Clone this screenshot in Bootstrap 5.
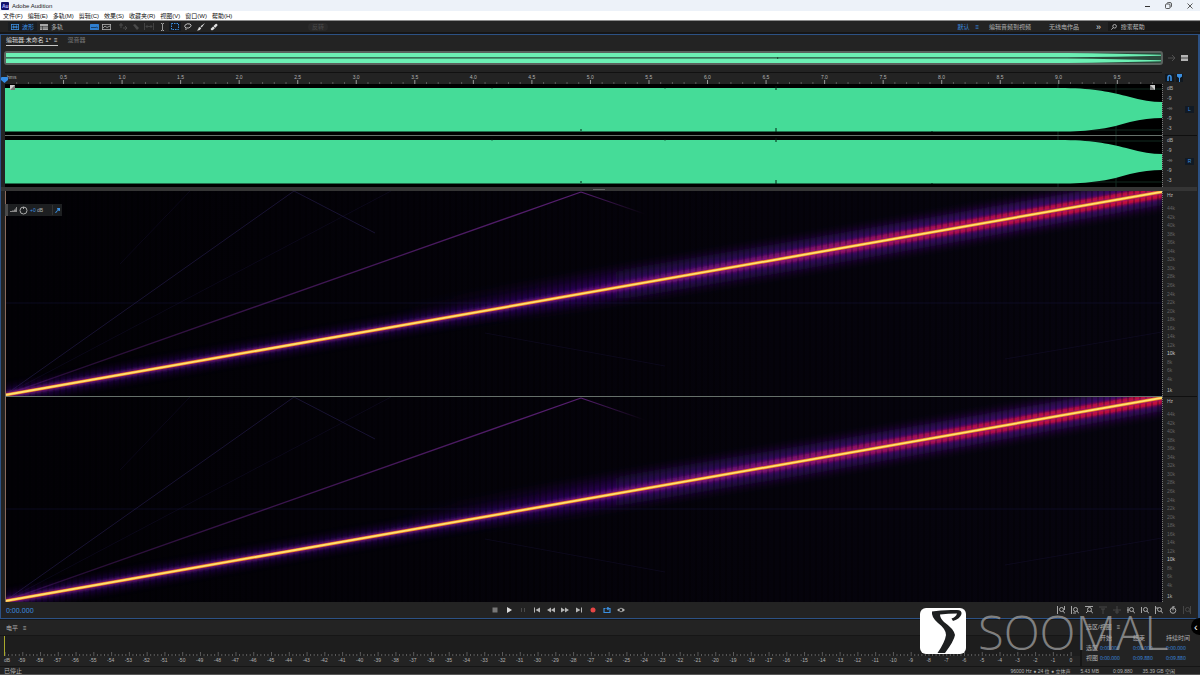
<!DOCTYPE html>
<html lang="zh-CN">
<head>
<meta charset="utf-8">
<meta name="viewport" content="width=device-width, initial-scale=1">
<title>Adobe Audition</title>
<link href="https://cdn.jsdelivr.net/npm/bootstrap@5.3.0/dist/css/bootstrap.min.css" rel="stylesheet">
<style>
  :root { --panel:#232323; --edge:#161616; --blue:#3b8fe0; --dim:#b2b2b2; --focus:#2c5184; }
  body { font-family:"Liberation Sans","Noto Sans CJK SC",sans-serif; font-size:6px; line-height:8px; background:var(--edge); color:var(--dim); overflow:hidden; }
  button, input { font:inherit; color:inherit; background:none; border:0; padding:0; }
  button { white-space:nowrap; }
  svg { display:block; }
  .titlebar { height:11px; background:#edf2f9; color:#222; }
  .titlebar button { width:21px; }
  .menus { height:10px; background:#fff; color:#111; border-bottom:1px solid #8c8c8c; gap:5px; padding:0 3px; }
  .tools { height:11px; background:var(--panel); }
  .mode { height:9px; gap:3px; padding:0 3px; }
  .mode.on { background:#191c20; color:var(--blue); }
  .tool { width:12px; height:9px; }
  .tool svg, .knob svg, .view-tool svg { margin:auto; }
  .pill { background:#2a2a2a; color:#4b4b4b; border-radius:4px; width:20px; }
  .search { background:#191919; height:9px; width:92px; padding:0 3px; gap:4px; }
  .search input { min-width:0; outline:0; }
  .search input::placeholder { color:#b8b8b8; opacity:1; }
  .accent { color:var(--blue); }
  .editor { margin-top:2px; border:1px solid var(--focus); border-right-width:2px; background:var(--panel); padding:0 1px 0 0; }
  .tabs { height:15px; padding:1px 0 0 5px; gap:10px; }
  .tab-on { color:#d8d8d8; border-bottom:1px solid #c8c8c8; gap:3px; height:10px; word-spacing:0; }
  .overview { height:15px; padding-left:3px; gap:5px; margin-bottom:7px; }
  .ov-box { height:14px; border:2px solid #5a625e; border-radius:3px; background:#2b4a3c; }
  .gutter { width:4px; flex:none; }
  .scale { width:35px; flex:none; }
  .ruler { height:12px; border-top:1px solid #111; position:relative; }
  .ruler svg, .levels svg { position:absolute; left:0; bottom:0; width:100%; }
  .rlabels { width:100%; font-size:5px; line-height:8px; overflow:hidden; }
  .rlabels span { flex:0 0 5.06%; text-align:center; }
  .rlabels span:first-child { flex-basis:2.53%; text-align:left; padding-left:2px; }
  .ruler svg.playhead { left:-4px; top:4px; bottom:auto; width:7px; z-index:2; }
  .waves { flex:103 1 0; min-height:0; }
  .specs { flex:411 1 0; min-height:0; }
  .plot { background:#000; min-width:0; min-height:0; }
  .plot svg.graph { position:absolute; inset:0; width:100%; height:100%; }
  .channel { position:relative; flex:1 1 0; min-height:0; }
  .channel + .channel { border-top:1px solid #66706a; }
  .side + .side { border-top:1px solid #0f0f0f; }
  .side { flex:1 1 0; min-height:0; padding-left:4px; font-size:5px; border-left:1px dotted #777; }
  .db { padding-bottom:3px; }
  .chip { width:9px; height:7px; line-height:7px; background:#111a24; color:var(--blue); text-align:center; margin-right:3px; }
  .hz span { flex:1 1 0; min-height:0; display:flex; align-items:center; color:#626262; line-height:8px; }
  .hz span.edge { flex-grow:1.5; color:#b0b0b0; }
  .hz span.edge:first-child { align-items:flex-start; }
  .hz span.ten { color:#c8c8c8; }
  .splitter { height:4px; background:#353535; }
  .grip { width:12px; height:1px; background:#666; }
  .hud { position:absolute; left:0; top:13px; height:12px; background:#1d1f21; gap:2px; z-index:2; font-size:5px; padding-right:2px; }
  .hud .bar { width:3px; height:12px; background:#4a4a4a; }
  .hud .rule { width:1px; height:10px; background:#333; margin-left:7px; }
  .transport { height:16px; padding:0 3px 0 5px; }
  .clock { width:40.6%; font-family:"Open Sans",sans-serif; font-size:7px; line-height:10px; color:var(--blue); padding-top:1px; }
  .knob, .view-tool { width:14px; height:14px; color:#b5b5b5; }
  .off { color:#4a4a4a; }
  .meters { margin-top:1px; height:46px; }
  .panel { background:var(--panel); }
  .phead { height:16px; padding-left:6px; gap:5px; border-bottom:1px solid #161616; }
  .levels { position:relative; background:#1d1d1d; margin-left:4px; border-left:1px solid #a8a82c; height:20px; }
  .dbl { padding-left:4px; height:8px; font-size:5px; line-height:8px; overflow:hidden; }
  .dbl span { flex:1 1 0; min-width:0; text-align:center; white-space:nowrap; }
  .dbl span:first-child { flex-grow:.5; text-align:left; }
  .selview { width:118px; flex:none; margin-left:2px; }
  .selview table { width:112px; margin-left:4px; margin-top:2px; line-height:10px; table-layout:fixed; }
  .selview th, .selview td { padding:0; font-weight:400; text-align:left; white-space:nowrap; }
  .selview td { color:var(--blue); font-family:"Open Sans",sans-serif; font-size:5px; }
  .selview .w-label { width:14px; }
  .selview .w-time { width:33px; }
  .status { height:9px; background:var(--panel); border-top:1px solid #151515; padding:0 25px 0 4px; gap:7px; border-bottom:1px solid #555; }
  .status .facts { font-size:5px; gap:10px; }
  .brand { position:absolute; left:920px; top:608px; gap:12px; z-index:5; pointer-events:none; }
  .brand b { font-family:"Open Sans","Lato",sans-serif; font-weight:300; font-size:47px; line-height:48px; color:rgba(165,165,165,.72); }
  .drawer { position:absolute; right:-8px; top:618px; width:17px; height:17px; border-radius:50%; background:#000; z-index:6; color:#fff; text-align:left; padding-left:3px; line-height:16px; font-size:11px; }
</style>
<script src="https://cdn.jsdelivr.net/npm/bootstrap@5.3.0/dist/js/bootstrap.bundle.min.js"></script>
</head>
<body class="d-flex flex-column vh-100 position-relative">

<header class="titlebar d-flex align-items-center">
  <svg width="9" height="8"><rect x="1" width="8" height="8" rx="1" fill="#10106b"/><text x="2" y="6" font-size="5" font-weight="700" fill="#b9b9ff">Au</text></svg>
  <span class="flex-fill" style="padding-left:3px">Adobe Audition</span>
  <button aria-label="最小化"><svg width="5" height="6" class="mx-auto"><path d="M0 3.5h5" stroke="#333"/></svg></button>
  <button aria-label="还原"><svg width="7" height="7" class="mx-auto" fill="none" stroke="#333" stroke-width=".8"><rect x=".5" y="2" width="4.500" height="4.500" rx="1"/><path d="M2 1.500Q2.200.5 3.200.5H5Q6.500.5 6.500 2v2Q6.500 5 5.500 5.200"/></svg></button>
  <button aria-label="关闭"><svg width="6" height="6" class="mx-auto"><path d="M.5.5l5 5m0-5l-5 5" stroke="#333" stroke-width=".8"/></svg></button>
</header>

<nav class="menus d-flex align-items-center" aria-label="菜单">
  <button>文件(F)</button><button>编辑(E)</button><button>多轨(M)</button><button>剪辑(C)</button><button>效果(S)</button><button>收藏夹(R)</button><button>视图(V)</button><button>窗口(W)</button><button>帮助(H)</button>
</nav>

<div class="tools d-flex align-items-center">
  <button class="mode on d-flex align-items-center" style="margin-left:8px"><svg width="8" height="6" fill="none" stroke="currentColor" stroke-width=".8"><rect x=".4" y=".4" width="7.200" height="5.200"/><path d="M1 3h6M2.500 1.500v3M4 2v2M5.500 1.500v3"/></svg>波形</button>
  <button class="mode d-flex align-items-center"><svg width="8" height="6" fill="#aaa"><path d="M0 0h8v2H0zM0 2.500h2v1.300H0zM2.500 2.500H8v1.300H2.500zM0 4.300h2V6H0zM2.500 4.300H8V6H2.500z"/></svg>多轨</button>
  <div class="d-flex" style="margin-left:22px">
    <button class="tool" aria-label="显示频谱"><svg width="9" height="6"><rect width="9" height="6" rx=".5" fill="#2f7fd0"/><path d="M1 4l1-1 1 1 1-1 1 1 1-1 2 1" stroke="#143150" fill="none" stroke-width=".8"/></svg></button>
    <button class="tool" aria-label="显示音高"><svg width="9" height="6" fill="none" stroke="#b0b0b0" stroke-width=".8"><rect x=".4" y=".4" width="8.200" height="5.200"/><path d="M1 4l2-2 2 1.500L8 2"/></svg></button>
  </div>
  <div class="d-flex" style="margin-left:5px;gap:1px">
    <button class="tool off" aria-label="移动"><svg width="8" height="8" fill="none" stroke="currentColor"><path d="M2 0v5M0 2h4M4 5h4M6 3l2 2-2 2"/></svg></button>
    <button class="tool off" aria-label="剃刀"><svg width="8" height="8"><path d="M1 2l2-1 4 4-2 2z" fill="currentColor"/></svg></button>
    <button class="tool off" aria-label="滑动"><svg width="10" height="7" fill="none" stroke="currentColor" stroke-width=".8"><path d="M.5 0v7M9.500 0v7M2 3.500h6M3.500 2L2 3.500 3.500 5M6.500 2L8 3.500 6.500 5"/></svg></button>
    <button class="tool" aria-label="时间选择"><svg width="5" height="8" fill="none" stroke="#b8b8b8" stroke-width=".8"><path d="M1 .5h1l.5.5.5-.5h1M2.500 1v6M1 7.500h1l.5-.5.5.5h1"/></svg></button>
    <button class="tool" aria-label="框选" style="background:#15191e"><svg width="8" height="7" fill="none" stroke="#3b8fe0" stroke-dasharray="1.500 1"><rect x=".5" y=".5" width="7" height="6"/></svg></button>
    <button class="tool" aria-label="套索"><svg width="8" height="8" fill="none" stroke="#c0c0c0"><path d="M2 5Q0 4 1 2.200 3 0 6 1 8 2 6.500 3.800 5 5.500 2.500 5q-1 0-.5 2"/></svg></button>
    <button class="tool" aria-label="画笔"><svg width="8" height="8" fill="#ddd"><path d="M8 0L3.500 3.200 4.700 4.500zM3 4Q1.500 4 1.200 6L0 7.500Q3 8 4.200 5.300z"/></svg></button>
    <button class="tool" aria-label="污点修复"><svg width="8" height="8"><path d="M1 5.500L5.500 1Q7.500 0 7.500 2.500L3 7Q0 8 1 5.500z" fill="#ddd"/><path d="M3 3l2.500 2.500" stroke="#333" stroke-width=".7"/></svg></button>
  </div>
  <button class="pill" style="margin-left:88px" disabled>反转</button>
  <button class="accent ms-auto">默认</button>
  <button class="accent" style="margin-left:6px" aria-label="工作区选项">≡</button>
  <button style="margin-left:10px">编辑音频到视频</button>
  <button style="margin-left:18px">无线电作品</button>
  <button style="margin:0 7px 0 17px;font-size:9px;color:#ddd" aria-label="更多">»</button>
  <label class="search d-flex align-items-center"><svg width="6" height="6" fill="none" stroke="#ccc" stroke-width=".8"><circle cx="3.600" cy="2.300" r="1.800"/><path d="M2.300 3.600L.3 5.700"/></svg><input type="search" placeholder="搜索帮助" aria-label="搜索帮助"></label>
</div>

<main class="editor d-flex flex-column flex-fill">
  <div class="tabs d-flex align-items-start">
    <button class="tab-on d-flex">编辑器:未命名 1* <span>≡</span></button>
    <button style="color:#777">混音器</button>
  </div>
  <div class="overview d-flex align-items-center">
    <div class="ov-box flex-fill"><svg width="100%" height="10" viewBox="0 0 1154 10" preserveAspectRatio="none"><path d="M0 0H1060Q1110 .5 1154 1.800V2.800Q1110 3.900 1060 4.200H0zM0 5.600H1060Q1110 6.200 1154 7.200V8.200Q1110 9.500 1060 10H0z" fill="#6cf0b4"/><path d="M771 4v2" stroke="#243"/></svg></div>
    <svg width="8" height="8" fill="none" stroke="#505050"><path d="M0 4h7M4 1l3 3-3 3"/></svg>
    <button aria-label="列表" style="margin-right:9px"><svg width="7" height="6"><path d="M0 0h7v6H0z" fill="#b4b4b4"/><path d="M0 3h7" stroke="#444"/></svg></button>
  </div>

  <div class="d-flex">
    <div class="gutter"></div>
    <div class="ruler flex-fill">
      <svg height="4" id="timeTicks"></svg>
      <div class="rlabels d-flex" id="timeLabels"></div>
      <svg class="playhead" height="6"><path d="M0 1Q0 0 1 0H6Q7 0 7 1V3L3.500 6 0 3z" fill="#358de6"/></svg>
    </div>
    <div class="scale d-flex align-items-center" style="gap:2px;padding-left:3px">
      <button aria-label="吸附" style="background:#101820"><svg width="9" height="8" fill="none" stroke="#3b8fe0" stroke-width="1.600"><path d="M3 7V3.500Q3 1.500 4.500 1.500T6 3.500V7"/></svg></button>
      <button aria-label="标记" style="background:#101820"><svg width="7" height="8" fill="#3b8fe0"><path d="M1 0h5v2.500L4 4v4H3V4L1 2.500z"/></svg></button>
    </div>
  </div>

  <section class="waves d-flex" aria-label="波形">
    <div class="gutter"></div>
    <div class="plot flex-fill d-flex flex-column">
      <div class="channel wave"></div>
      <div class="channel wave"></div>
    </div>
    <div class="scale d-flex flex-column">
      <div class="side d-flex align-items-center justify-content-between"><div class="db d-flex flex-column justify-content-between h-100"><span>dB</span><span>-9</span><span>-∞</span><span>-9</span><span>-3</span></div><button class="chip">L</button></div>
      <div class="side d-flex align-items-center justify-content-between"><div class="db d-flex flex-column justify-content-between h-100"><span>dB</span><span>-9</span><span>-∞</span><span>-9</span><span>-3</span></div><button class="chip">R</button></div>
    </div>
  </section>

  <div class="splitter d-flex align-items-center justify-content-center"><div class="grip"></div></div>

  <section class="specs d-flex" aria-label="频谱">
    <div class="gutter"></div>
    <div class="plot flex-fill d-flex flex-column">
      <div class="channel spec">
        <div class="hud d-flex align-items-center"><span class="bar"></span>
          <svg width="7" height="6" fill="#888"><path d="M0 5h7V0H6v1H5.500v1.500H4V3.500H2V4H0z"/></svg>
          <svg width="9" height="9" fill="none" stroke="#aaa"><circle cx="4.500" cy="4.500" r="3.500"/><path d="M4.500 1v2"/></svg>
          <span><span class="accent">+0</span> dB</span>
          <span class="rule"></span>
          <button aria-label="固定"><svg width="5" height="5" fill="#3b8fe0"><path d="M2 0h3v3L3 2.500 1 5 0 4.500 2.500 2z"/></svg></button>
        </div>
      </div>
      <div class="channel spec"></div>
    </div>
    <div class="scale d-flex flex-column">
      <div class="side hz d-flex flex-column"></div>
      <div class="side hz d-flex flex-column"></div>
    </div>
  </section>

  <div class="transport d-flex align-items-center">
    <div class="clock">0:00.000</div>
    <div class="d-flex">
      <button class="knob off" aria-label="停止"><svg width="6" height="6"><path d="M.5.5h5v5h-5z" fill="#777"/></svg></button>
      <button class="knob" aria-label="播放"><svg width="6" height="6" fill="#ddd"><path d="M1 0l5 3-5 3z"/></svg></button>
      <button class="knob off" aria-label="暂停"><svg width="6" height="6" fill="currentColor"><path d="M1 1h1v4H1zM4 1h1v4H4z"/></svg></button>
      <button class="knob" aria-label="到开头"><svg width="6" height="6" fill="currentColor"><path d="M0 .5h1v5H0zM6 .5v5L1.500 3z"/></svg></button>
      <button class="knob" aria-label="快退"><svg width="8" height="6" fill="currentColor"><path d="M4 .5v5L0 3zM8 .5v5L4 3z"/></svg></button>
      <button class="knob" aria-label="快进"><svg width="8" height="6" fill="currentColor"><path d="M0 .5v5L4 3zM4 .5v5L8 3z"/></svg></button>
      <button class="knob" aria-label="到结尾"><svg width="6" height="6" fill="currentColor"><path d="M5 .5h1v5H5zM0 .5v5L4.500 3z"/></svg></button>
      <button class="knob" aria-label="录制"><svg width="6" height="6"><circle cx="3" cy="3" r="2.500" fill="#e64545"/></svg></button>
      <button class="knob" aria-label="循环"><svg width="8" height="6" fill="none" stroke="#3b8fe0" stroke-width="1.200"><path d="M2.500 1.500H1v4h6v-4H4M5.500 0L4 1.500 5.500 3"/></svg></button>
      <button class="knob" aria-label="跳过选区"><svg width="8" height="6" fill="currentColor"><path d="M0 3l2-1.500v3zM8 3L5.500 1v4z"/><circle cx="4" cy="3" r="1.800" fill="none" stroke="currentColor" stroke-width=".8"/></svg></button>
    </div>
    <div class="d-flex ms-auto" id="zoomTools"></div>
  </div>
</main>

<section class="meters d-flex">
  <div class="panel flex-fill" style="min-width:0">
    <div class="phead d-flex align-items-center"><span>电平</span><span>≡</span></div>
    <div class="levels"><svg height="4" id="dbTicks"></svg></div>
    <div class="dbl d-flex" id="dbLabels"></div>
  </div>
  <div class="panel selview">
    <div class="d-flex" style="padding:3px 4px 0;gap:5px"><span>选区/视图</span><span>≡</span></div>
    <table>
      <thead><tr><th class="w-label"></th><th class="w-time">开始</th><th class="w-time">结束</th><th>持续时间</th></tr></thead>
      <tbody><tr><th scope="row">选区</th><td>0:00.000</td><td>0:00.000</td><td>0:00.000</td></tr>
      <tr><th scope="row">视图</th><td>0:00.000</td><td>0:09.880</td><td>0:09.880</td></tr></tbody>
    </table>
  </div>
</section>

<footer class="status d-flex align-items-center"><span class="me-auto">已停止</span><div class="facts d-flex"><span>96000 Hz ● 24 位 ● 立体声</span><span>5.43 MB</span><span style="margin-left:4px">0:09.880</span><span>35.39 GB 空闲</span></div></footer>

<div class="brand d-flex">
  <svg width="46" height="46"><rect width="46" height="46" rx="6" fill="#fff"/><path d="M12 3.500Q22 1.500 37 2 42 2 41.500 6 40 11 33 13L31.500 10.500Q36 9 37 5.500 28 5.500 20 6.500 20 10 24 14 34 21 35 27 34 33 25 45H17.500Q25 34 26 27 26 21 18 15 11 9 12 3.500z" fill="#1d1f20"/></svg>
  <b>SOOMAL</b>
</div>
<button class="drawer" aria-label="展开">‹</button>

<script>
  const svgLine = (x, y1, y2, c) => `<line x1="${x}%" x2="${x}%" y1="${y1}" y2="${y2}" stroke="${c}" />`;
  const el = id => document.getElementById(id);

  // Time ruler: one label each half second, minor ticks each tenth
  let labels = '<span>hms</span>', ticks = '';
  for (let i = 1; i < 20; i++) labels += `<span>${(i / 2).toFixed(1)}</span>`;
  for (let i = 1; i < 99; i++) ticks += svgLine(i * 1.012, i % 5 ? 2 : 0, 4, i % 5 ? '#5a5a5a' : '#999');
  el('timeLabels').innerHTML = labels;
  el('timeTicks').innerHTML = ticks;

  // Level meter scale, -60 to 0 dB
  labels = '<span>dB</span>'; ticks = '';
  for (let d = -59; d <= 0; d++) labels += `<span>${d}</span>`;
  for (let i = 0; i <= 300; i++) ticks += svgLine(i * 100 / 302.5, i % 5 ? 2 : 0, 4, '#5c5c5c');
  el('dbLabels').innerHTML = labels;
  el('dbTicks').innerHTML = ticks;

  // Frequency scales
  labels = '<span class="edge">Hz</span>';
  for (let k = 44; k >= 4; k -= 2) labels += `<span class="${k === 10 ? 'ten' : ''}">${k}k</span>`;
  labels += '<span class="edge">1k</span>';
  document.querySelectorAll('.hz').forEach(n => n.innerHTML = labels);

  // Waveforms
  document.querySelectorAll('.wave').forEach((n, i) => {
    n.innerHTML = `<svg class="graph" viewBox="0 0 1157 51" preserveAspectRatio="none">
      <path d="M0 25.500H1157M0 5H1157M0 46H1157M1053 0V51M1111 0V51" stroke="#122b20"/>
      <path d="M0 4H1060C1090 4.500 1105 8 1125 13Q1142 18 1157 18V34Q1142 34 1125 38C1105 44 1090 47 1060 47.500H0z" fill="#45dc98"/>
      <path d="M576 47v-2M771 2v4M771 48v-4M487 3.500v1M660 3.500v1M927 47v1" stroke="#021" /></svg>`;
    if (!i) n.innerHTML += '<svg width="5" height="5" style="position:absolute;left:5px;top:1px"><path d="M0 0h5v5H0z" fill="#777"/><path d="M5 0L0 5V0" fill="#ccc"/></svg><svg width="5" height="5" style="position:absolute;right:7px;top:1px"><path d="M0 0h5v5H0z" fill="#ccc"/><path d="M0 0L5 5H0" fill="#777"/></svg>';
  });

  // Spectrograms: the sweep, its glow, and the weak harmonics
  document.querySelectorAll('.spec').forEach((n, i) => {
    n.insertAdjacentHTML('afterbegin', `<svg class="graph" viewBox="0 0 1157 205" preserveAspectRatio="none">
      <defs>
        <linearGradient id="bg${i}"><stop offset="0" stop-color="#020105"/><stop offset="1" stop-color="#06040e"/></linearGradient>
        <linearGradient id="wide${i}"><stop offset=".1" stop-color="#3a0a78" stop-opacity="0"/><stop offset=".4" stop-color="#3c0e70" stop-opacity=".55"/><stop offset=".75" stop-color="#4c1080" stop-opacity=".7"/><stop offset="1" stop-color="#501080" stop-opacity=".75"/></linearGradient>
        <linearGradient id="hot${i}"><stop offset="0" stop-color="#7a1090" stop-opacity="0"/><stop offset=".4" stop-color="#a01070" stop-opacity=".65"/><stop offset=".7" stop-color="#c80a40"/><stop offset="1" stop-color="#e00c28"/></linearGradient>
        <linearGradient id="h${i}"><stop offset="0" stop-color="#7a2aa0" stop-opacity=".25"/><stop offset="1" stop-color="#7a2a9c" stop-opacity=".7"/></linearGradient>
        <linearGradient id="t${i}"><stop offset="0" stop-color="#7a2a9c" stop-opacity=".7"/><stop offset="1" stop-color="#7a2a9c" stop-opacity="0"/></linearGradient>
        <filter id="b${i}" x="-5%" y="-20%" width="110%" height="140%"><feGaussianBlur stdDeviation="5"/></filter>
        <filter id="s${i}" x="-5%" y="-20%" width="110%" height="140%"><feGaussianBlur stdDeviation="1.600"/></filter>
        <pattern id="p${i}" width="6" height="205" patternUnits="userSpaceOnUse"><rect width="2" height="205" fill="#000" opacity=".28"/></pattern>
      </defs>
      <rect width="1157" height="205" fill="url(#bg${i})"/>
      <path d="M300 134L560 88L800 48L1157 -14V14L800 78L560 118L400 140z" fill="url(#wide${i})" filter="url(#b${i})"/>
      <path d="M0 204L1157 0" stroke="#3c1088" stroke-width="10" opacity=".75" filter="url(#b${i})"/>
      <path d="M480 118L600 93L800 57L1157 -5V7L800 69L600 103z" fill="url(#hot${i})" filter="url(#s${i})"/>
      <rect width="1157" height="205" fill="url(#p${i})"/>
      <path d="M0 112H1157" stroke="#1d1a52" stroke-width=".7" opacity=".5"/>
      <path d="M0 204L289 0L370 42" fill="none" stroke="#2a2158" stroke-width=".9" opacity=".6"/>
      <path d="M0 204L386 0M115 73L185 0M1000 168L1157 141M480 142L660 175" fill="none" stroke="#221b48" stroke-width=".8" opacity=".35"/>
      <path d="M0 204L576 1" stroke="url(#h${i})" stroke-width="1.300"/>
      <path d="M576 1L640 23" stroke="url(#t${i})" stroke-width="1.300"/>
      <path d="M0 204L1157 .8" stroke="#8a1480" stroke-width="5" filter="url(#s${i})"/>
      <path d="M0 204L1157 .8" stroke="#e8801c" stroke-width="3.200"/>
      <path d="M0 204L1157 .8" stroke="#ffe070" stroke-width="1.800"/>
      <path d="M.5 0V205" stroke="#8a6a5c"/></svg>`);
  });

  // Zoom buttons: magnifier with bracket variants
  const lens = '<circle cx="4.500" cy="3.500" r="2"/><path d="M6 5l2 2.500"/>';
  const zoomIcons = [
    ['时间放大', '<path d="M.5 0v8M7.500 0v4"/>' + lens], ['时间缩小', '<path d="M.5 0v8M2 7h3"/>' + lens],
    ['全部缩小', '<path d="M0 .5h8"/>' + lens + '<path d="M1 7l2-2"/>'], ['幅度放大', '<path d="M0 1h8M2 3h4M4 3v5"/>', 1],
    ['幅度缩小', '<path d="M4 0v8M0 4h8M2 6h4"/>', 1], ['放大入点', '<path d="M0 4h2M1 1v6"/>' + lens],
    ['放大出点', '<path d="M.5 1v6"/>' + lens], ['放大选区', '<path d="M.5 0v8M2 1v2"/>' + lens],
    ['定时', '<circle cx="4" cy="4.500" r="2.800"/><path d="M4 4.500V0h2"/>'], ['缩放全部', '<path d="M.5 0v8M7.500 0v8"/>' + lens, 1]];
  el('zoomTools').innerHTML = zoomIcons.map(([t, p, off]) =>
    `<button class="view-tool ${off ? 'off' : ''}" aria-label="${t}"><svg width="8" height="8" fill="none" stroke="currentColor" stroke-width=".9">${p}</svg></button>`).join('');
</script>
</body>
</html>
